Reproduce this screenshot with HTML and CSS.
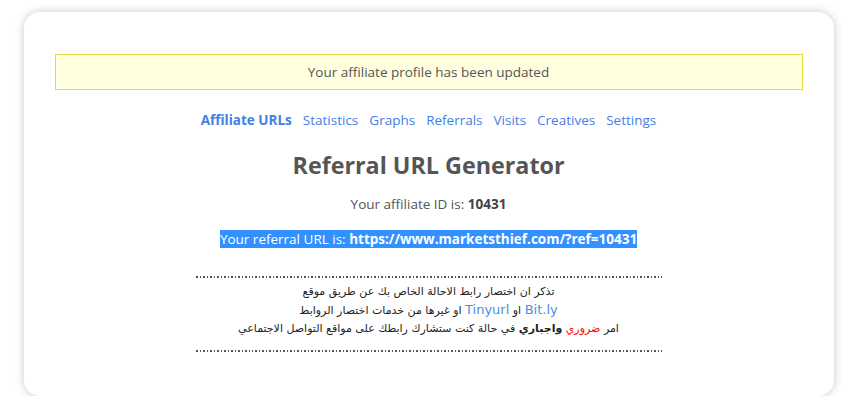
FILE: index.html
```html
<!DOCTYPE html>
<html>

<head>
    <meta charset="utf-8">
    <title>Affiliate URLs</title>
    <link rel="stylesheet" href="styles.css">
</head>

<body>
    <div class="card">
        <div class="notice">Your affiliate profile has been updated</div>

        <ul class="tabs">
            <li><a class="active" href="#">Affiliate URLs</a></li>
            <li><a href="#">Statistics</a></li>
            <li><a href="#">Graphs</a></li>
            <li><a href="#">Referrals</a></li>
            <li><a href="#">Visits</a></li>
            <li><a href="#">Creatives</a></li>
            <li><a href="#">Settings</a></li>
        </ul>

        <h1 class="title">Referral URL Generator</h1>

        <p class="id-line">Your affiliate ID is: <strong>10431</strong></p>

        <p class="url-line"><span class="picked">Your referral URL is: <strong>https://www.marketsthief.com/?ref=10431</strong></span></p>

        <div class="tip" dir="rtl">
            <div class="dots"></div>
            <div class="tip-text">
                تذكر ان اختصار رابط الاحالة الخاص بك عن طريق موقع<br>
                <a href="#">Bit.ly</a> او <a href="#">Tinyurl</a> او غيرها من خدمات اختصار الروابط<br>
                امر <span class="red">ضروري</span> <b>واجباري</b> في حالة كنت ستشارك رابطك على مواقع التواصل الاجتماعي
            </div>
            <div class="dots"></div>
        </div>
    </div>
</body>

</html>
```

FILE: styles.css
```css
body {
    margin: 0;
    background: #fff;
    font-family: "Open Sans", "Liberation Sans", sans-serif;
    font-size: 13.5px;
    color: #555;
}

.card {
    width: 810px;
    height: 384px;
    box-sizing: border-box;
    margin: 12px auto 0;
    padding: 42px 31px 0 31px;
    background: #fff;
    border-radius: 16px;
    box-shadow: 0 0 10px rgba(0, 0, 0, 0.22);
}

.notice {
    height: 34px;
    line-height: 34px;
    text-align: center;
    background: #ffffe0;
    border: 1px solid #e6dc3c;
    color: #555;
}

.tabs {
    display: flex;
    justify-content: center;
    gap: 11px;
    list-style: none;
    margin: 20px 0 0;
    padding: 0;
    line-height: 20px;
}

.tabs a {
    color: #3f80e8;
    text-decoration: none;
}

.tabs a.active {
    font-weight: bold;
}

.title {
    margin: 19px 0 0;
    text-align: center;
    font-size: 23.3px;
    line-height: 32px;
    font-weight: bold;
    color: #555;
}

.id-line {
    margin: 13px 0 0;
    text-align: center;
    line-height: 20px;
}

.id-line strong {
    color: #444;
}

.url-line {
    margin: 15px 0 0;
    text-align: center;
    line-height: 20px;
}

.picked {
    background: #3390ff;
    color: #fff;
}

.tip {
    width: 466px;
    margin: 27px auto 0;
    font-family: "DejaVu Sans", sans-serif;
    font-size: 11px;
    color: #222;
    text-align: center;
}

.dots {
    height: 2px;
    background: repeating-linear-gradient(to right, #555 0, #555 1.5px, transparent 1.5px, transparent 3.5px);
}

.tip-text {
    padding: 5px 0 12px;
    line-height: 18px;
}

.tip-text a {
    color: #4a8fe6;
    font-size: 13px;
    text-decoration: none;
}

.red {
    color: #f00;
}
```
